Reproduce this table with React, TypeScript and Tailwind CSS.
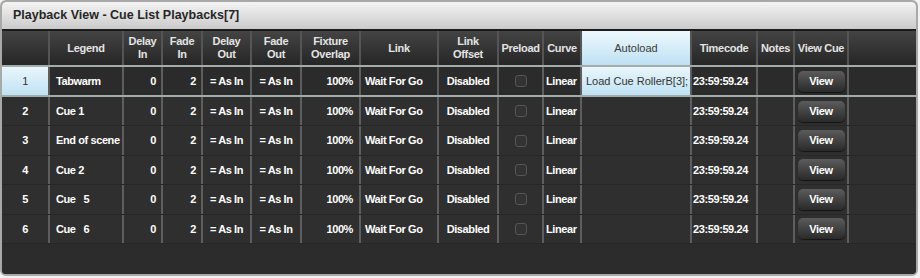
import React from "react";

const GRID =
  "grid grid-cols-[48px_74px_39px_40px_49px_50px_59px_78px_60px_45px_38px_110px_66px_37px_54px_1fr]";

const headers: { label: React.ReactNode; blue?: boolean }[] = [
  { label: "" },
  { label: "Legend" },
  { label: <>Delay<br />In</> },
  { label: <>Fade<br />In</> },
  { label: <>Delay<br />Out</> },
  { label: <>Fade<br />Out</> },
  { label: <>Fixture<br />Overlap</> },
  { label: "Link" },
  { label: <>Link<br />Offset</> },
  { label: "Preload" },
  { label: "Curve" },
  { label: "Autoload", blue: true },
  { label: "Timecode" },
  { label: "Notes" },
  { label: "View Cue" },
];

const rows = [
  { n: "1", legend: "Tabwarm", autoload: "Load Cue RollerB[3];" },
  { n: "2", legend: "Cue 1", autoload: "" },
  { n: "3", legend: "End of scene", autoload: "" },
  { n: "4", legend: "Cue 2", autoload: "" },
  { n: "5", legend: "Cue   5", autoload: "" },
  { n: "6", legend: "Cue   6", autoload: "" },
];

function Row({ r, sel }: { r: (typeof rows)[number]; sel: boolean }) {
  const cell = "border-r-2 border-[#5e5e5e] flex items-center overflow-hidden whitespace-pre";
  return (
    <div
      className={
        sel
          ? `${GRID} h-[28px] bg-[#2b2b2b]`
          : `${GRID} h-[29.4px] bg-[#2f2f2f] border-b border-[#272727]`
      }
    >
      <div
        className={
          sel
            ? "border-r-2 border-[#5e5e5e] flex items-center justify-center bg-linear-to-b from-[#eaf6fc] to-[#bfe2f4] text-[#333] font-normal"
            : `${cell} justify-center`
        }
      >
        {r.n}
      </div>
      <div className={`${cell} pl-[6px]`}>{r.legend}</div>
      <div className={`${cell} justify-end pr-[5px]`}>0</div>
      <div className={`${cell} justify-end pr-[5px]`}>2</div>
      <div className={`${cell} justify-center`}>= As In</div>
      <div className={`${cell} justify-center`}>= As In</div>
      <div className={`${cell} justify-end pr-[6px]`}>100%</div>
      <div className={`${cell} pl-[4px]`}>Wait For Go</div>
      <div className={`${cell} justify-center`}>Disabled</div>
      <div className={`${cell} justify-center`}>
        <div className="w-[12px] h-[12px] rounded-[3px] border border-[#555] bg-[#333]" />
      </div>
      <div className={`${cell} pl-[2px]`}>Linear</div>
      <div
        className={
          sel
            ? "border-r-2 border-[#5e5e5e] flex items-center pl-[4px] bg-linear-to-b from-[#eaf6fc] to-[#bfe2f4] text-[#333] font-normal tracking-normal whitespace-nowrap overflow-hidden"
            : cell
        }
      >
        {r.autoload}
      </div>
      <div className={`${cell} pl-[1px] overflow-visible`}>23:59:59.24</div>
      <div className={cell}></div>
      <div className={`${cell} justify-center`}>
        <div className="w-[47px] h-[21px] rounded-[5px] bg-linear-to-b from-[#5c5c5c] to-[#2a2a2a] shadow-[0_1px_1px_rgba(0,0,0,0.6)] flex items-center justify-center text-white">
          View
        </div>
      </div>
      <div></div>
    </div>
  );
}

export default function App() {
  return (
    <div className="w-[920px] h-[278px] bg-[#f2f2f2] font-['Liberation_Sans',Arial,sans-serif]">
      <div className="w-[918px] h-[276px] border-2 border-[#a9a9a9] rounded-[6px] overflow-hidden bg-[#2c2c2c] flex flex-col">
        <div className="h-[27px] shrink-0 bg-linear-to-b from-[#f4f4f4] to-[#cbcbcb] flex items-center pl-[11px] text-[12.5px] font-bold text-[#262626]">
          Playback View - Cue List Playbacks[7]
        </div>
        <div className="h-[2px] shrink-0 bg-[#1c1c1c]" />
        <div className={`${GRID} h-[34px] shrink-0 text-[11px] leading-[13px] font-bold tracking-[-0.3px]`}>
          {headers.map((h, i) => (
            <div
              key={i}
              className={
                h.blue
                  ? "border-r-2 border-[#555] flex items-center justify-center text-center bg-linear-to-b from-[#eef8fd] to-[#bde1f4] text-[#3a3a3a] font-normal tracking-normal"
                  : "border-r-2 border-[#555] flex items-center justify-center text-center bg-linear-to-b from-[#444] to-[#262626] text-[#e4e4e4]"
              }
            >
              {h.label}
            </div>
          ))}
          <div className="bg-linear-to-b from-[#444] to-[#262626]" />
        </div>
        <div className="h-[2px] shrink-0 bg-[#a4abab]" />
        <div className="text-[11px] font-bold text-white tracking-[-0.4px]">
          <Row r={rows[0]} sel />
          <div className="h-[2px] bg-[#a4abab]" />
          {rows.slice(1).map((r) => (
            <Row key={r.n} r={r} sel={false} />
          ))}
        </div>
        <div className="flex-1 bg-[#2c2c2c]" />
      </div>
    </div>
  );
}
